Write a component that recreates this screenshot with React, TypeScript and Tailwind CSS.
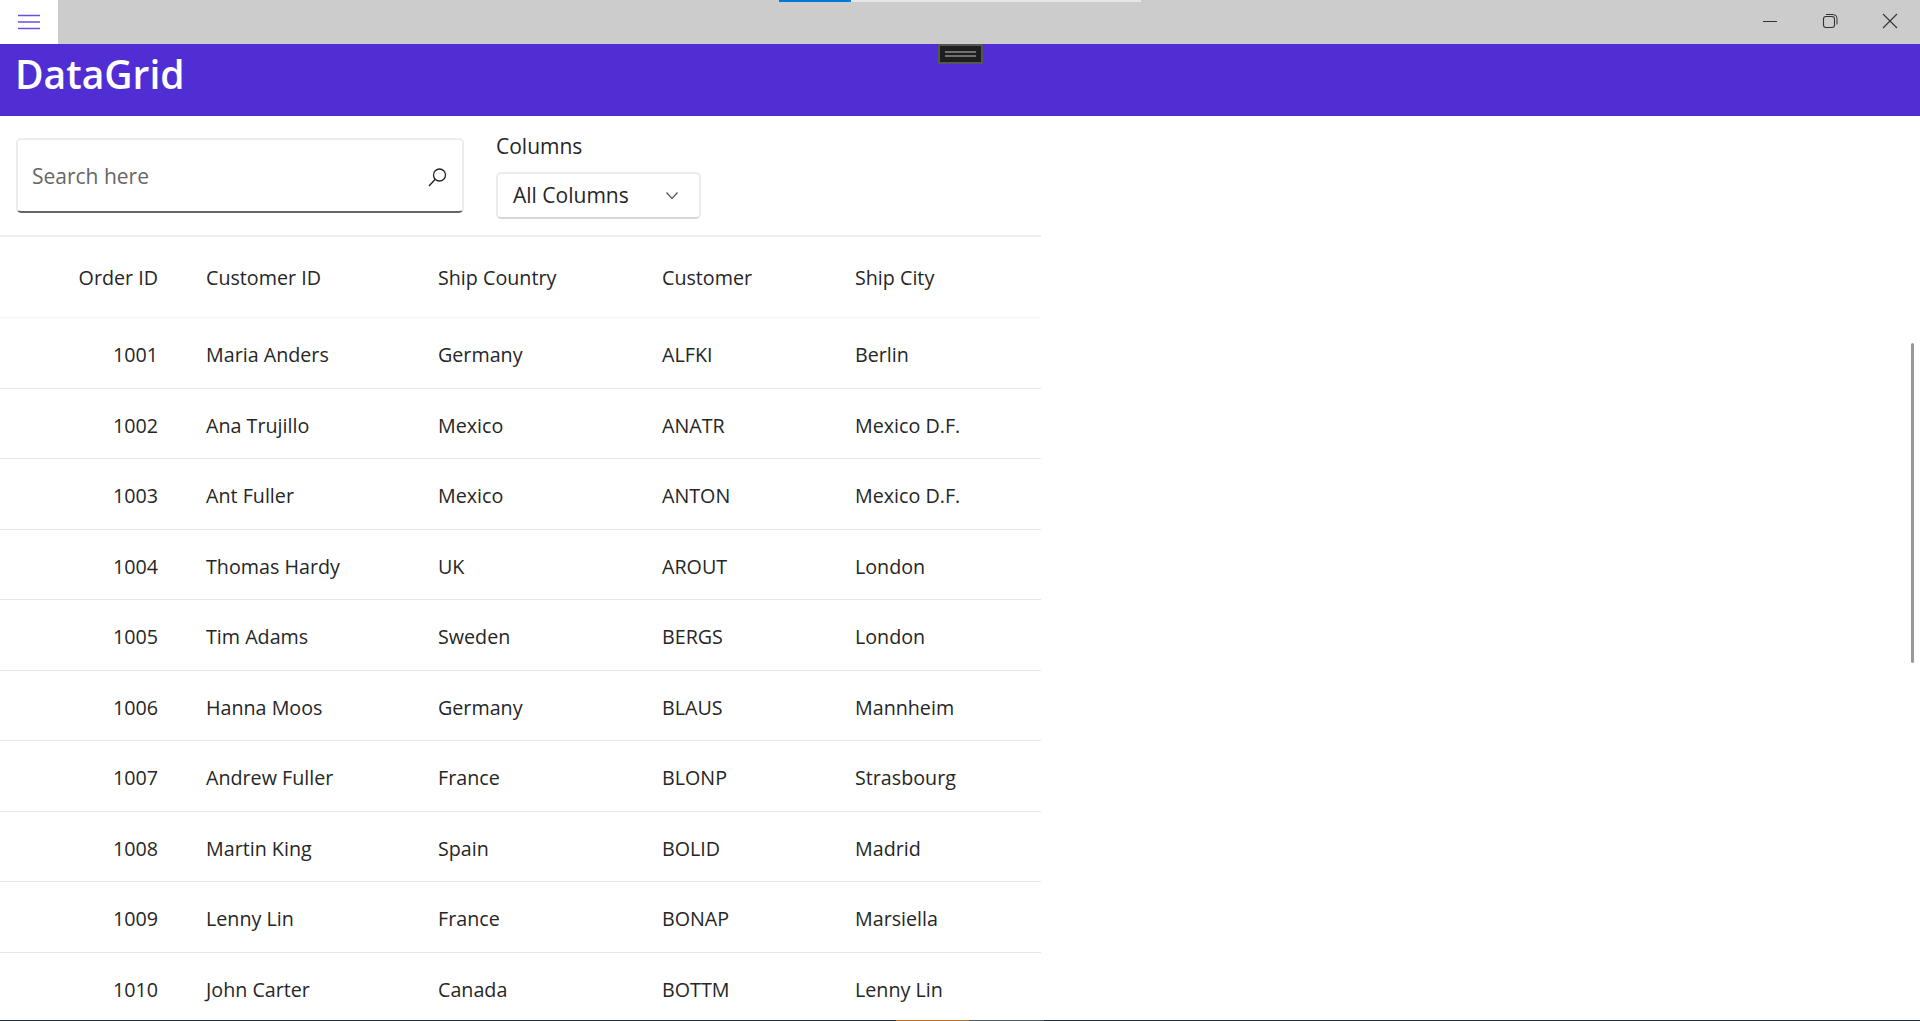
import React from "react";

const rows = [
  ["1001", "Maria Anders", "Germany", "ALFKI", "Berlin"],
  ["1002", "Ana Trujillo", "Mexico", "ANATR", "Mexico D.F."],
  ["1003", "Ant Fuller", "Mexico", "ANTON", "Mexico D.F."],
  ["1004", "Thomas Hardy", "UK", "AROUT", "London"],
  ["1005", "Tim Adams", "Sweden", "BERGS", "London"],
  ["1006", "Hanna Moos", "Germany", "BLAUS", "Mannheim"],
  ["1007", "Andrew Fuller", "France", "BLONP", "Strasbourg"],
  ["1008", "Martin King", "Spain", "BOLID", "Madrid"],
  ["1009", "Lenny Lin", "France", "BONAP", "Marsiella"],
  ["1010", "John Carter", "Canada", "BOTTM", "Lenny Lin"],
];

function Row({ cells, header }: { cells: string[]; header?: boolean }) {
  return (
    <div className={`flex items-center ${header ? "h-[81px] border-b border-[#f6f6f6] pt-[2px]" : "h-[70.5px] border-b border-[#e8e8e8] pt-[5px]"}`}>
      <div className="w-[158px] shrink-0 text-right">{cells[0]}</div>
      <div className="ml-[48px] w-[232px] shrink-0">{cells[1]}</div>
      <div className="w-[224px] shrink-0">{cells[2]}</div>
      <div className="w-[193px] shrink-0">{cells[3]}</div>
      <div className="flex-1">{cells[4]}</div>
    </div>
  );
}

export default function App() {
  return (
    <div className="relative h-[1021px] w-full overflow-hidden bg-white text-[#262626] font-['Open_Sans','Noto_Sans',sans-serif]">
      <header className="relative flex h-11 bg-[#cccccc]">
        <div className="flex h-11 w-[58px] items-center justify-center bg-white">
          <svg width="22" height="16" viewBox="0 0 22 16" className="text-[#6d4de0]">
            <path d="M0 1.5h22M0 8h22M0 14.5h22" stroke="currentColor" strokeWidth="1.6" />
          </svg>
        </div>
        <div className="absolute left-[779px] top-0 flex h-0.5 w-[362px]">
          <div className="w-[72px] bg-[#0078d4]" />
          <div className="flex-1 bg-[#e6e6e6]" />
        </div>
        <div className="ml-auto flex h-11 items-center text-[#333333]">
          <svg width="60" height="44" viewBox="0 0 60 44">
            <path d="M23 21.5h14" stroke="currentColor" strokeWidth="1" />
          </svg>
          <svg width="60" height="44" viewBox="0 0 60 44">
            <rect x="23.5" y="16.5" width="11" height="11" rx="2.5" fill="none" stroke="currentColor" strokeWidth="1.1" />
            <path d="M26 14.5h7a4 4 0 0 1 4 4v6" fill="none" stroke="currentColor" strokeWidth="1" />
          </svg>
          <svg width="60" height="44" viewBox="0 0 60 44">
            <path d="M23 14l14 14M37 14L23 28" stroke="currentColor" strokeWidth="1.1" />
          </svg>
        </div>
      </header>

      <div className="relative h-[72px] bg-[#512ed4]">
        <h1 className="pl-[15px] pt-[8px] text-[39px] leading-[44px] font-semibold text-white">DataGrid</h1>
        <div className="absolute left-[938px] top-0 flex h-[20px] w-[45px] flex-col items-center justify-center gap-[2px] border-2 border-[#555555] bg-[#1e1e1e]">
          <div className="h-0.5 w-[31px] bg-[#707070]" />
          <div className="h-0.5 w-[31px] bg-[#707070]" />
        </div>
      </div>

      <div className="flex h-[119px] w-[1041px] items-start gap-[32px] pl-4 text-[21px]">
        <div className="mt-[22px] flex h-[75px] w-[448px] items-center justify-between rounded-[5px] border-2 border-[#ececec] border-b-[2px] border-b-[#666666] pl-[14px] pr-[15px] pt-[2px] text-[#666666]">
          <span>Search here</span>
          <svg width="20" height="20" viewBox="0 0 20 20" className="text-[#222222]">
            <circle cx="12.5" cy="8" r="6" fill="none" stroke="currentColor" strokeWidth="1.3" />
            <path d="M8.3 12.3L2 19" stroke="currentColor" strokeWidth="1.4" />
          </svg>
        </div>
        <div className="flex flex-col">
          <div className="mt-[12px] h-[37px] leading-[37px]">Columns</div>
          <div className="mt-[7px] flex h-[47px] w-[205px] items-center justify-between rounded-[5px] border-2 border-[#ececec] border-b-[2px] border-b-[#d8d8d8] pl-[15px] pr-[21px]">
            <span>All Columns</span>
            <svg width="12" height="7" viewBox="0 0 12 7" className="text-[#555555]">
              <path d="M0.5 0.5l5.5 6L11.5 0.5" fill="none" stroke="currentColor" strokeWidth="1.2" />
            </svg>
          </div>
        </div>
      </div>

      <div className="w-[1041px] border-t-2 border-[#efefef] text-[19.7px]">
        <Row header cells={["Order ID", "Customer ID", "Ship Country", "Customer", "Ship City"]} />
        {rows.map((r) => (
          <Row key={r[0]} cells={r} />
        ))}
      </div>

      <div className="absolute right-[6px] top-[343px] h-[320px] w-[3px] rounded-full bg-[#999999]" />
      <div className="absolute bottom-0 left-0 flex h-px w-full bg-[#1f2d3a]">
        <div className="ml-[896px] w-[73px] bg-[#b87333]" />
        <div className="w-[75px] bg-[#4a5a60]" />
      </div>
    </div>
  );
}
